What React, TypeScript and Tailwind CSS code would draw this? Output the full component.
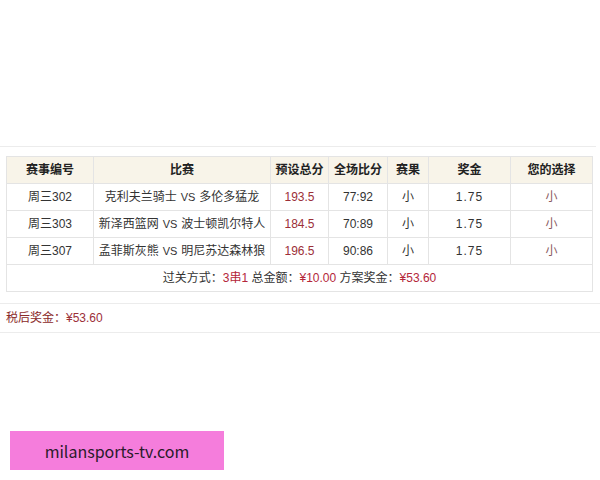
import React from "react";

const rows = [
  { id: "周三302", match: ["克利夫兰骑士", "多伦多猛龙"], total: "193.5", score: "77:92", res: "小", odds: "1.75", pick: "小" },
  { id: "周三303", match: ["新泽西篮网", "波士顿凯尔特人"], total: "184.5", score: "70:89", res: "小", odds: "1.75", pick: "小" },
  { id: "周三307", match: ["孟菲斯灰熊", "明尼苏达森林狼"], total: "196.5", score: "90:86", res: "小", odds: "1.75", pick: "小" },
];

export default function App() {
  const font = { fontFamily: '"Liberation Sans", "Noto Sans CJK SC", sans-serif' };
  const td = "border border-[#e4e4e4] text-center align-middle p-0 h-[27px]";
  const th = "border border-[#e4e4e4] text-center align-middle p-0 h-[27px] font-bold text-[#222] bg-[#f8f4e9]";
  return (
    <div className="w-[600px] h-[480px] bg-white text-[12px] text-[#333]" style={font}>
      <div className="pt-[146px]">
        <div className="w-[596px] border-t border-[#ececec] pt-[9px]">
          <table className="ml-[6px] w-[586px] border-collapse table-fixed">
            <colgroup>
              <col className="w-[87px]" />
              <col className="w-[177px]" />
              <col className="w-[58px]" />
              <col className="w-[59px]" />
              <col className="w-[41px]" />
              <col className="w-[82px]" />
              <col className="w-[82px]" />
            </colgroup>
            <thead>
              <tr>
                <th className={th}>赛事编号</th>
                <th className={th}>比赛</th>
                <th className={th}>预设总分</th>
                <th className={th}>全场比分</th>
                <th className={th}>赛果</th>
                <th className={th}>奖金</th>
                <th className={th}>您的选择</th>
              </tr>
            </thead>
            <tbody>
              {rows.map((r) => (
                <tr key={r.id}>
                  <td className={`${td} whitespace-nowrap`}>{r.id}</td>
                  <td className={`${td} whitespace-nowrap`}>
                    {r.match[0]}
                    <span className="text-[11px] mx-[4px]">VS</span>
                    {r.match[1]}
                  </td>
                  <td className={`${td} text-[#9c2f38]`}>{r.total}</td>
                  <td className={td}>{r.score}</td>
                  <td className={td}>{r.res}</td>
                  <td className={`${td} tracking-[1px]`}>{r.odds}</td>
                  <td className={`${td} text-[#8a5a60]`}>{r.pick}</td>
                </tr>
              ))}
              <tr>
                <td colSpan={7} className={td}>
                  过关方式：<span className="text-[#b4263a]">3串1</span> 总金额：
                  <span className="text-[#b4263a]">¥10.00</span> 方案奖金：
                  <span className="text-[#b4263a]">¥53.60</span>
                </td>
              </tr>
            </tbody>
          </table>
        </div>
        <div className="w-[600px] mt-[11px] border-t border-[#ececec] border-b h-[30px] flex items-center pl-[6px] text-[#8b2a2a]">
          税后奖金：<span className="text-[#9c2f38]">¥53.60</span>
        </div>
        <div
          className="mt-[98px] ml-[10px] w-[214px] h-[39px] bg-[#f57ddc] flex items-center justify-center text-[16px] text-[#2a1a2a]"
          style={{ fontFamily: '"Noto Sans CJK SC", "Noto Sans", sans-serif' }}
        >
          milansports-tv.com
        </div>
      </div>
    </div>
  );
}
